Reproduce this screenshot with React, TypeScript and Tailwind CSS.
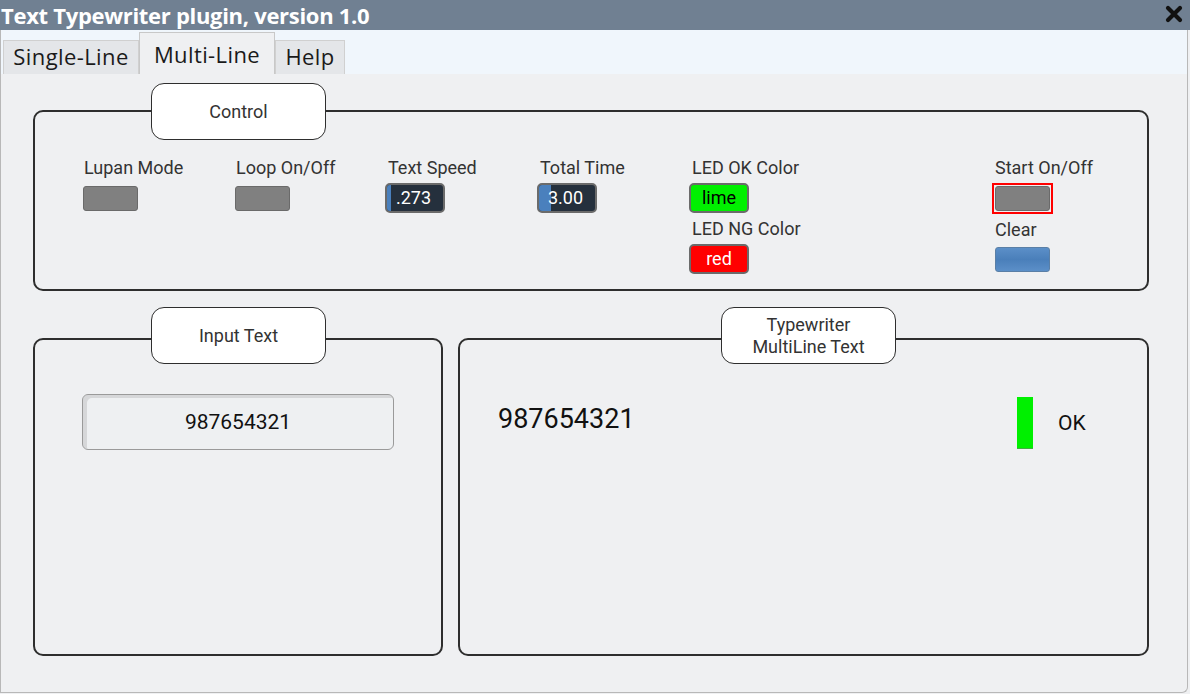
import React from "react";

const lbl = "text-[18px] leading-[20px] text-[#333]";

function Toggle({ color = "gray" }: { color?: "gray" | "blue" }) {
  return (
    <div
      className={
        "w-[55px] h-[25px] rounded-[3px] border " +
        (color === "gray"
          ? "bg-[#808080] border-[#6a6a6a]"
          : "bg-gradient-to-b from-[#5b8fc8] via-[#4a7fba] to-[#5b8fc8] border-[#5a7fa6]")
      }
    />
  );
}

function Slider({ value, fill }: { value: string; fill: number }) {
  return (
    <div className="relative w-[60px] h-[30px] rounded-[5px] border-2 border-[#6b6b6b] bg-[#25303d] overflow-hidden">
      <div className="absolute left-0 top-0 bottom-0 bg-[#4a80bd]" style={{ width: fill }} />
      <div className="relative pl-[9px] text-white text-[18px] leading-[26px]">{value}</div>
    </div>
  );
}

function Group({
  title,
  legendLeft,
  legendTop,
  className,
  children,
  twoLine,
}: {
  title: React.ReactNode;
  legendLeft: number;
  legendTop: number;
  className: string;
  children?: React.ReactNode;
  twoLine?: boolean;
}) {
  return (
    <div className={"relative border-2 border-[#2e2e2e] rounded-[10px] " + className}>
      <div
        className={
          "absolute h-[57px] w-[175px] bg-white border-[1.5px] border-[#2e2e2e] rounded-[13px] flex items-center justify-center text-center text-[#333] " +
          (twoLine ? "text-[18px] leading-[22px]" : "text-[18px]")
        }
        style={{ left: legendLeft, top: legendTop }}
      >
        {title}
      </div>
      {children}
    </div>
  );
}

export default function App() {
  return (
    <div className="w-[1190px] h-[694px] bg-[#eff0f2] font-['Roboto',sans-serif] overflow-hidden">
      {/* title bar */}
      <div className="h-[30px] bg-[#708092] flex items-center justify-between pl-[1px] pr-[6px]">
        <div className="text-white font-bold text-[22px] leading-[30px] font-['Open_Sans',sans-serif] tracking-[-0.3px] mt-[-1px]">
          Text Typewriter plugin, version 1.0
        </div>
        <svg width="20" height="20" viewBox="0 0 20 20" className="mt-[-2px]">
          <path d="M4 4 L16 16 M16 4 L4 16" stroke="#111" strokeWidth="4.2" strokeLinecap="round" />
        </svg>
      </div>
      {/* body frame */}
      <div className="w-[1188px] h-[663px] border-l border-r border-b border-[#b8b8b8] rounded-br-[6px] flex flex-col">
        {/* tab bar */}
        <div className="h-[44px] bg-[#f0f6fc] flex items-end pl-[2px] font-['Open_Sans',sans-serif] text-[22px] tracking-[0.4px] text-[#1a1a1a]">
          <div className="h-[34px] w-[136px] flex justify-center bg-[#e4e6e9] border border-b-0 border-[#d0d0d0] leading-[30px]">
            Single-Line
          </div>
          <div className="h-[42px] w-[136px] flex items-start justify-center pt-[5px] bg-[#eff0f2] border border-b-0 border-[#c8c8c8] leading-[32px]">
            Multi-Line
          </div>
          <div className="h-[34px] w-[70px] flex justify-center bg-[#e4e6e9] border border-b-0 border-[#d0d0d0] leading-[30px]">
            Help
          </div>
        </div>
        {/* content */}
        <div className="flex-1 pl-[32px] pt-[36px]">
          <Group title="Control" legendLeft={116} legendTop={-29} className="w-[1116px] h-[181px]">
            <div className="flex pl-[49px] pt-[46px]">
              <div className="w-[152px] flex flex-col">
                <div className={lbl + " mb-[8px]"}>Lupan Mode</div>
                <div className="ml-[-1px]"><Toggle /></div>
              </div>
              <div className="w-[152px] flex flex-col">
                <div className={lbl + " mb-[8px]"}>Loop On/Off</div>
                <div className="ml-[-1px]"><Toggle /></div>
              </div>
              <div className="w-[152px] flex flex-col">
                <div className={lbl + " mb-[5px]"}>Text Speed</div>
                <div className="ml-[-3px]"><Slider value=".273" fill={4} /></div>
              </div>
              <div className="w-[152px] flex flex-col">
                <div className={lbl + " mb-[5px]"}>Total Time</div>
                <div className="ml-[-3px]"><Slider value="3.00" fill={12} /></div>
              </div>
              <div className="w-[303px] flex flex-col">
                <div className={lbl + " mb-[5px]"}>LED OK Color</div>
                <div className="ml-[-3px] w-[60px] h-[30px] rounded-[5px] border-2 border-[#6b6b6b] bg-[#00f000] text-black text-[18px] leading-[26px] text-center">
                  lime
                </div>
                <div className={lbl + " mt-[6px] mb-[5px]"}>LED NG Color</div>
                <div className="ml-[-3px] w-[60px] h-[30px] rounded-[5px] border-2 border-[#6b6b6b] bg-[#ff0000] text-white text-[18px] leading-[26px] text-center">
                  red
                </div>
              </div>
              <div className="flex flex-col">
                <div className={lbl + " mb-[5px]"}>Start On/Off</div>
                <div className="ml-[-3px] w-[61px] h-[31px] border-2 border-[#ff0000] flex items-center justify-center">
                  <Toggle />
                </div>
                <div className={lbl + " mt-[6px] mb-[7px]"}>Clear</div>
                <Toggle color="blue" />
              </div>
            </div>
          </Group>
          <div className="flex gap-[15px] mt-[47px]">
            <Group title="Input Text" legendLeft={116} legendTop={-33} className="w-[410px] h-[318px]">
              <div className="pl-[47px] pt-[54px]">
                <div className="w-[312px] h-[56px] rounded-[6px] border border-[#9a9a9a] bg-[#eef0f2] shadow-[inset_4px_3px_0_#d6d7d9] flex items-center justify-center text-[21px] text-[#111] pt-[2px]">
                  987654321
                </div>
              </div>
            </Group>
            <Group
              title={<span>Typewriter<br />MultiLine Text</span>}
              twoLine
              legendLeft={261}
              legendTop={-33}
              className="w-[691px] h-[318px]"
            >
              <div className="flex pt-[57px] pl-[38px]">
                <div className="w-[519px] text-[27px] leading-[32px] text-[#111] pt-[6px]">987654321</div>
                <div className="w-[16px] h-[52px] bg-[#00f000] border-b border-[#3fae3f]" />
                <div className="ml-[25px] text-[21px] leading-[24px] text-[#111] mt-[14px]">OK</div>
              </div>
            </Group>
          </div>
        </div>
      </div>
    </div>
  );
}
